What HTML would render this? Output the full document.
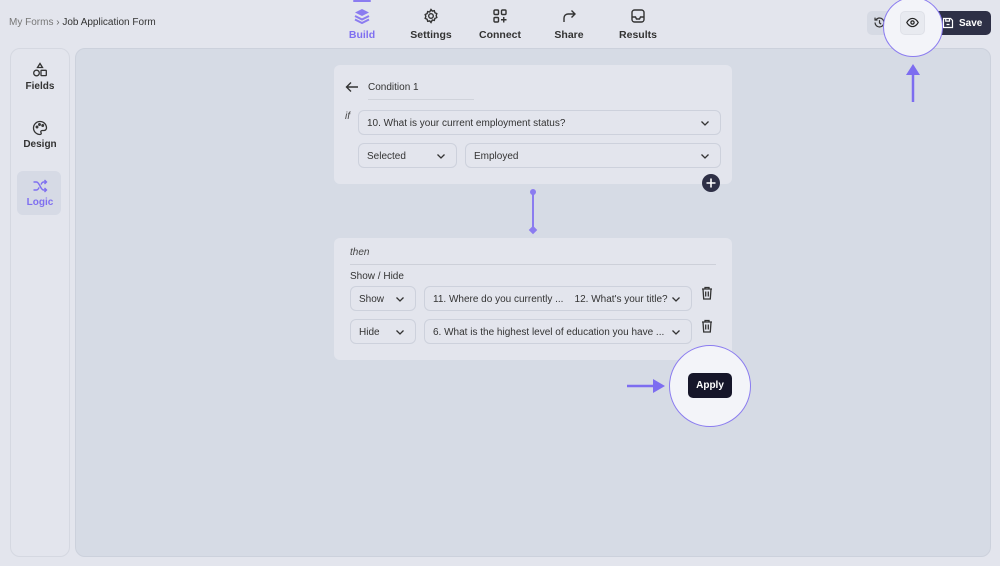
<!DOCTYPE html>
<html><head><style>
*{box-sizing:border-box;margin:0;padding:0}
body{width:1000px;height:566px;background:#e3e5ed;font-family:"Liberation Sans",sans-serif;position:relative;overflow:hidden;color:#2b2d3a}
.abs{position:absolute}
.tab{position:absolute;top:8px;width:70px;text-align:center;font-size:10.5px;font-weight:bold;color:#333}
.tab svg{display:block;margin:0 auto 5px}
.sel{position:absolute;height:25px;border:1px solid #cdd1dc;border-radius:6px;background:#e3e5ed;font-size:10px;color:#333;padding:7px 8px 0 8px}
.chev{position:absolute;right:10px;top:8px}
.card{position:absolute;background:#e3e5ed;border-radius:6px}
</style></head><body>
<div class="abs" style="left:9px;top:17px;font-size:10px;color:#777">My Forms <span style="color:#666">›</span> <span style="color:#333">Job Application Form</span></div>
<div class="abs" style="left:353px;top:0;width:18px;height:2px;background:#8b7cf0;border-radius:1px"></div>
<div class="tab" style="left:327px;color:#7f6ff0"><svg width="16" height="16" viewBox="0 0 16 16" fill="#8b7cf0"><path d="M8 1l7 3.5-7 3.5-7-3.5z"/><path d="M1 8l7 3.5 7-3.5" stroke="#8b7cf0" stroke-width="2" fill="none"/><path d="M1 11.5l7 3.5 7-3.5" stroke="#8b7cf0" stroke-width="2" fill="none"/></svg>Build</div>
<div class="tab" style="left:396px"><svg width="16" height="16" viewBox="0 0 16 16" fill="none" stroke="#333" stroke-width="1.4"><circle cx="8" cy="8" r="2.3"/><path d="M8 1.5l1.3 1.6 2-.4.6 2 1.9.9-.6 2 .6 1.9-1.9.9-.6 2-2-.4L8 14.5l-1.3-1.6-2 .4-.6-2-1.9-.9.6-2-.6-1.9 1.9-.9.6-2 2 .4z"/></svg>Settings</div>
<div class="tab" style="left:465px"><svg width="16" height="16" viewBox="0 0 16 16" fill="none" stroke="#333" stroke-width="1.4"><rect x="2" y="2" width="4.5" height="4.5" rx="1"/><rect x="9.5" y="2" width="4.5" height="4.5" rx="1"/><rect x="2" y="9.5" width="4.5" height="4.5" rx="1"/><path d="M11.75 9v5.5M9 11.75h5.5"/></svg>Connect</div>
<div class="tab" style="left:534px"><svg width="16" height="16" viewBox="0 0 16 16" fill="none" stroke="#333" stroke-width="1.4"><path d="M3 14V10a4 4 0 014-4h7M10.5 2.5L14 6l-3.5 3.5"/></svg>Share</div>
<div class="tab" style="left:603px"><svg width="16" height="16" viewBox="0 0 16 16" fill="none" stroke="#333" stroke-width="1.4"><rect x="2" y="2" width="12" height="12" rx="2.5"/><path d="M2 9h3.5l1 2h3l1-2H14"/></svg>Results</div>

<div class="abs" style="left:10px;top:48px;width:60px;height:509px;border:1px solid #d5d8e1;border-radius:10px;background:#e3e5ed"></div>
<div class="abs" style="left:10px;top:62px;width:60px;text-align:center;font-size:10px;font-weight:bold;color:#333"><svg width="16" height="16" viewBox="0 0 16 16" fill="none" stroke="#333" stroke-width="1.3" style="display:block;margin:0 auto 3px"><path d="M8 1.5l2.5 4h-5z"/><circle cx="4.5" cy="11" r="2.8"/><rect x="9" y="8.3" width="5.3" height="5.3" rx=".5"/></svg>Fields</div>
<div class="abs" style="left:10px;top:120px;width:60px;text-align:center;font-size:10px;font-weight:bold;color:#333"><svg width="16" height="16" viewBox="0 0 16 16" fill="none" stroke="#333" stroke-width="1.3" style="display:block;margin:0 auto 3px"><path d="M8 1.5a6.5 6.5 0 000 13c1.2 0 1.5-1 1-2-.6-1 .1-2 1.3-2h1.7a2.5 2.5 0 002.5-2.5C14.5 4.3 11.6 1.5 8 1.5z"/><circle cx="5" cy="7" r=".8"/><circle cx="7.5" cy="4.5" r=".8"/><circle cx="10.7" cy="5.5" r=".8"/></svg>Design</div>
<div class="abs" style="left:17px;top:171px;width:44px;height:44px;border-radius:6px;background:#d6dae5"></div>
<div class="abs" style="left:10px;top:178px;width:60px;text-align:center;font-size:10px;font-weight:bold;color:#7f6ff0"><svg width="16" height="16" viewBox="0 0 16 16" fill="none" stroke="#7f6ff0" stroke-width="1.4" style="display:block;margin:0 auto 3px"><path d="M1.5 4h3c3 0 4 8 7 8h3M1.5 12h3c1.3 0 2-1.2 2.6-2.6M9 6.6C9.6 5.2 10.3 4 11.5 4h3M12.5 2l2 2-2 2M12.5 10l2 2-2 2"/></svg>Logic</div>
<div class="abs" style="left:75px;top:48px;width:916px;height:509px;border:1px solid #ccd1dc;border-radius:10px;background:#d6dbe5"></div>

<div class="abs" style="left:867px;top:11px;width:25px;height:24px;border-radius:5px;background:#d6dae4"></div>
<svg class="abs" style="left:873px;top:16px" width="13" height="13" viewBox="0 0 16 16" fill="none" stroke="#333" stroke-width="1.5"><path d="M2.5 8a5.5 5.5 0 105.5-5.5c-2 0-3.5 1-4.5 2.5M2.5 2v3h3M8 5v3.5l2 1.5"/></svg>
<div class="abs" style="left:933px;top:11px;width:58px;height:24px;border-radius:5px;background:#2e3046;color:#fff;font-size:10px;font-weight:bold;padding:7px 0 0 26px">Save</div>
<svg class="abs" style="left:942px;top:17px" width="12" height="12" viewBox="0 0 16 16" fill="none" stroke="#fff" stroke-width="1.6"><path d="M2 2h9.5L14 4.5V14H2z"/><path d="M5 2v3.5h5V2M6 10h4"/></svg>
<div class="abs" style="left:883px;top:-3px;width:60px;height:60px;border-radius:50%;background:#f3f4f9;border:1.5px solid #8b7cf0"></div>
<div class="abs" style="left:900px;top:11px;width:25px;height:24px;border-radius:5px;background:#e8eaf0;border:1px solid #dfe1e8"></div>
<svg class="abs" style="left:906px;top:17px" width="13" height="11" viewBox="0 0 16 12" fill="none" stroke="#222" stroke-width="1.5"><path d="M1 6s2.5-5 7-5 7 5 7 5-2.5 5-7 5-7-5-7-5z"/><circle cx="8" cy="6" r="2"/></svg>
<svg class="abs" style="left:904px;top:62px" width="18" height="40" viewBox="0 0 18 40"><path d="M9 40V12" stroke="#7d6df0" stroke-width="2.5"/><path d="M2 13L9 2l7 11z" fill="#7d6df0"/></svg>

<div class="card" style="left:334px;top:65px;width:398px;height:119px"></div>
<svg class="abs" style="left:345px;top:81px" width="14" height="12" viewBox="0 0 14 12" fill="none" stroke="#333" stroke-width="1.4"><path d="M13 6H1.5M6 1.5L1.5 6 6 10.5"/></svg>
<div class="abs" style="left:368px;top:82px;font-size:10px;color:#333">Condition 1</div>
<div class="abs" style="left:368px;top:99px;width:106px;border-top:1px solid #d0d3db"></div>
<div class="abs" style="left:345px;top:111px;font-size:10px;font-style:italic;color:#444">if</div>
<div class="sel" style="left:358px;top:110px;width:363px">10. What is your current employment status?<svg class="chev" width="10" height="8" viewBox="0 0 10 8" fill="none" stroke="#333" stroke-width="1.3"><path d="M1.5 2.5L5 6l3.5-3.5"/></svg></div>
<div class="sel" style="left:358px;top:143px;width:99px">Selected<svg class="chev" width="10" height="8" viewBox="0 0 10 8" fill="none" stroke="#333" stroke-width="1.3"><path d="M1.5 2.5L5 6l3.5-3.5"/></svg></div>
<div class="sel" style="left:465px;top:143px;width:256px">Employed<svg class="chev" width="10" height="8" viewBox="0 0 10 8" fill="none" stroke="#333" stroke-width="1.3"><path d="M1.5 2.5L5 6l3.5-3.5"/></svg></div>
<div class="abs" style="left:702px;top:174px;width:18px;height:18px;border-radius:50%;background:#2e3046"></div>
<svg class="abs" style="left:705px;top:177px" width="12" height="12" viewBox="0 0 12 12" stroke="#fff" stroke-width="1.6"><path d="M6 1.5v9M1.5 6h9"/></svg>
<div class="abs" style="left:532px;top:192px;width:2px;height:38px;background:#8b7cf0"></div>
<div class="abs" style="left:530px;top:189px;width:6px;height:6px;border-radius:50%;background:#8b7cf0"></div>
<div class="abs" style="left:530px;top:227px;width:6px;height:6px;background:#8b7cf0;transform:rotate(45deg)"></div>

<div class="card" style="left:334px;top:238px;width:398px;height:122px"></div>
<div class="abs" style="left:350px;top:247px;font-size:10px;font-style:italic;color:#444">then</div>
<div class="abs" style="left:350px;top:264px;width:366px;border-top:1px solid #cdd0d9"></div>
<div class="abs" style="left:350px;top:271px;font-size:10px;color:#333">Show / Hide</div>
<div class="sel" style="left:350px;top:286px;width:66px">Show<svg class="chev" width="10" height="8" viewBox="0 0 10 8" fill="none" stroke="#333" stroke-width="1.3"><path d="M1.5 2.5L5 6l3.5-3.5"/></svg></div>
<div class="sel" style="left:424px;top:286px;width:268px">11. Where do you currently ...&nbsp;&nbsp;&nbsp;&nbsp;12. What's your title?<svg class="chev" width="10" height="8" viewBox="0 0 10 8" fill="none" stroke="#333" stroke-width="1.3"><path d="M1.5 2.5L5 6l3.5-3.5"/></svg></div>
<div class="sel" style="left:350px;top:319px;width:66px">Hide<svg class="chev" width="10" height="8" viewBox="0 0 10 8" fill="none" stroke="#333" stroke-width="1.3"><path d="M1.5 2.5L5 6l3.5-3.5"/></svg></div>
<div class="sel" style="left:424px;top:319px;width:268px">6. What is the highest level of education you have ...<svg class="chev" width="10" height="8" viewBox="0 0 10 8" fill="none" stroke="#333" stroke-width="1.3"><path d="M1.5 2.5L5 6l3.5-3.5"/></svg></div>
<svg class="abs" style="left:701px;top:286px" width="12" height="14" viewBox="0 0 12 14" fill="none" stroke="#333" stroke-width="1.3"><path d="M1 3h10M4 3V1.5h4V3M2 3l.7 10h6.6L10 3M4.7 5.5v5M7.3 5.5v5"/></svg>
<svg class="abs" style="left:701px;top:319px" width="12" height="14" viewBox="0 0 12 14" fill="none" stroke="#333" stroke-width="1.3"><path d="M1 3h10M4 3V1.5h4V3M2 3l.7 10h6.6L10 3M4.7 5.5v5M7.3 5.5v5"/></svg>

<div class="abs" style="left:669px;top:345px;width:82px;height:82px;border-radius:50%;background:#f3f4f9;border:1.5px solid #8b7cf0"></div>
<div class="abs" style="left:688px;top:373px;width:44px;height:25px;border-radius:5px;background:#16162a;color:#fff;font-size:10px;font-weight:bold;text-align:center;padding-top:7px">Apply</div>
<svg class="abs" style="left:627px;top:378px" width="40" height="16" viewBox="0 0 40 16"><path d="M0 8h28" stroke="#7d6df0" stroke-width="2.5"/><path d="M26 1l12 7-12 7z" fill="#7d6df0"/></svg>
</body></html>
